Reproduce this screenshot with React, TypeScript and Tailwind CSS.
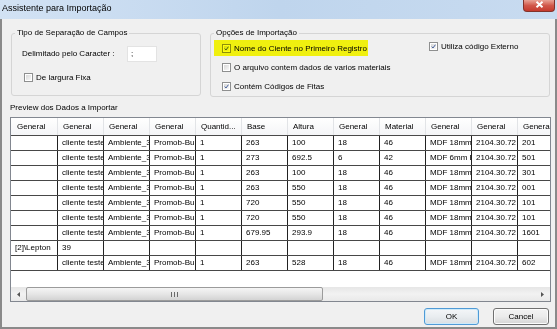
import React from 'react';

const columns = ['General', 'General', 'General', 'General', 'Quantid...', 'Base', 'Altura', 'General', 'Material', 'General', 'General', 'General'];

const rows: string[][] = [
  ['', 'cliente teste', 'Ambiente_3', 'Promob-Builder', '1', '263', '100', '18', '46', 'MDF 18mm Branco', '2104.30.72', '201'],
  ['', 'cliente teste', 'Ambiente_3', 'Promob-Builder', '1', '273', '692.5', '6', '42', 'MDF 6mm Branco', '2104.30.72', '501'],
  ['', 'cliente teste', 'Ambiente_3', 'Promob-Builder', '1', '263', '100', '18', '46', 'MDF 18mm Branco', '2104.30.72', '301'],
  ['', 'cliente teste', 'Ambiente_3', 'Promob-Builder', '1', '263', '550', '18', '46', 'MDF 18mm Branco', '2104.30.72', '001'],
  ['', 'cliente teste', 'Ambiente_3', 'Promob-Builder', '1', '720', '550', '18', '46', 'MDF 18mm Branco', '2104.30.72', '101'],
  ['', 'cliente teste', 'Ambiente_3', 'Promob-Builder', '1', '720', '550', '18', '46', 'MDF 18mm Branco', '2104.30.72', '101'],
  ['', 'cliente teste', 'Ambiente_3', 'Promob-Builder', '1', '679.95', '293.9', '18', '46', 'MDF 18mm Branco', '2104.30.72', '1601'],
  ['[2]\\Lepton', '39', '', '', '', '', '', '', '', '', '', ''],
  ['', 'cliente teste', 'Ambiente_3', 'Promob-Builder', '1', '263', '528', '18', '46', 'MDF 18mm Branco', '2104.30.72', '602'],
];

// win7 style checkbox, shrunk to the size of the screenshot
function CheckBox({ checked }: { checked?: boolean }) {
  return (
    <span className="flex h-[9px] w-[9px] shrink-0 items-center justify-center border border-[#8e8f8f] bg-white p-[1px]">
      <span className="flex h-full w-full items-center justify-center bg-gradient-to-br from-[#d9d9d9] to-[#f7f7f7]">
        {checked && (
          <svg width="7" height="7" viewBox="0 0 7 7">
            <path d="M1 3.6 L2.8 5.6 L6.2 1" fill="none" stroke="#3b5796" strokeWidth="1.3" />
          </svg>
        )}
      </span>
    </span>
  );
}

function Option({ label, checked }: { label: string; checked?: boolean }) {
  return (
    <div className="flex h-[15px] items-center gap-[3px]">
      <CheckBox checked={checked} />
      <span className="whitespace-nowrap">{label}</span>
    </div>
  );
}

export default function App() {
  return (
    <div className="flex h-[329px] w-[557px] flex-col overflow-hidden font-['Liberation_Sans',Arial,sans-serif] text-[8px] leading-[10px] text-black">
      {/* Title bar */}
      <div className="flex h-[19px] shrink-0 items-start justify-between bg-gradient-to-r from-[#d2e2f4] via-[#bfd5ed] to-[#c8dbf0] pl-[2px] pr-[2px]">
        <span className="mt-[3px] text-[9px] leading-[11px]">Assistente para Importação</span>
        <div className="flex h-[12px] w-[32px] items-start justify-center rounded-b-[4px] border border-t-0 border-[#83322a] bg-gradient-to-b from-[#e8a295] via-[#d1574a] to-[#c5392c]">
          <svg width="9" height="7" viewBox="0 0 9 7" className="mt-[1px]">
            <path d="M1.5 0.8 L7.5 6.2 M7.5 0.8 L1.5 6.2" stroke="white" strokeWidth="1.9" />
          </svg>
        </div>
      </div>

      {/* Dialog body */}
      <div className="flex flex-1 flex-col border-x-2 border-b-2 border-[#8a8a8a] bg-[#f0f0f0] pl-[8px] pr-[4px]">
        <div className="mt-[14px] flex">
          {/* Tipo de Separação de Campos */}
          <div className="ml-[1px] h-[63px] w-[190px] rounded-[3px] border border-[#d5d5d5]">
            <span className="-mt-[6px] ml-[3px] block w-fit bg-[#f0f0f0] px-[2px]">Tipo de Separação de Campos</span>
            <div className="mt-[8px] flex h-[16px] items-center pl-[10px]">
              <span className="w-[105px] whitespace-nowrap">Delimitado pelo Caracter :</span>
              <div className="flex h-[16px] w-[30px] items-center border border-[#e3e3e3] bg-white pl-[3px]">;</div>
            </div>
            <div className="ml-[12px] mt-[8px]">
              <Option label="De largura Fixa" />
            </div>
          </div>

          {/* Opções de Importação */}
          <div className="ml-[9px] h-[64px] w-[340px] rounded-[3px] border border-[#d5d5d5]">
            <span className="-mt-[6px] ml-[3px] block w-fit bg-[#f0f0f0] px-[2px]">Opções de Importação</span>
            <div className="flex pl-[11px]">
              <div className="mt-[3px] flex w-[207px] flex-col gap-[4px]">
                <div className="relative w-fit">
                  <Option label="Nome do Ciente no Primeiro Registro" checked />
                  <span className="absolute -left-[8px] -right-[1px] -top-[1px] bottom-0 bg-[#ffff10] mix-blend-multiply blur-[0.5px]" />
                </div>
                <Option label="O arquivo contem dados de varios materiais" />
                <Option label="Contém Códigos de Fitas" checked />
              </div>
              <div className="mt-[1px]">
                <Option label="Utiliza código Externo" checked />
              </div>
            </div>
          </div>
        </div>

        <span className="mt-[6px]">Preview dos Dados a Importar</span>

        {/* Preview list */}
        <div className="mt-[4px] flex h-[185px] w-[541px] flex-col overflow-hidden border border-[#828790] bg-white">
          <div className="flex h-[18px] shrink-0 border-b border-[#4a4a4a] bg-gradient-to-b from-white to-[#f4f5f7]">
            {columns.map((c, i) => (
              <div
                key={i}
                className={`${i === 0 ? 'w-[47px] pl-[6px]' : 'w-[46px] pl-[5px]'} shrink-0 overflow-hidden whitespace-nowrap border-r border-[#e2e4e7] leading-[17px]`}
              >
                {c}
              </div>
            ))}
          </div>
          {rows.map((r, ri) => (
            <div key={ri} className="flex h-[15px] shrink-0 border-b border-[#474747]">
              {r.map((v, i) => (
                <div
                  key={i}
                  className={`${i === 0 ? 'w-[47px] pl-[4px]' : 'w-[46px] pl-[4px]'} shrink-0 overflow-hidden whitespace-nowrap border-r border-[#222] leading-[14px]`}
                >
                  {v}
                </div>
              ))}
            </div>
          ))}
          <div className="flex-1" />

          {/* horizontal scrollbar */}
          <div className="flex h-[14px] shrink-0 items-center bg-gradient-to-b from-[#e6e6e6] via-[#f2f2f2] to-[#e9e9e9]">
            <div className="flex w-[15px] justify-center">
              <svg width="3" height="5" viewBox="0 0 3 5"><path d="M3 0 L0 2.5 L3 5 Z" fill="#555" /></svg>
            </div>
            <div className="flex h-[14px] w-[297px] items-center justify-center rounded-[2px] border border-[#9b9b9b] bg-gradient-to-b from-[#f5f5f5] via-[#e6e6e6] to-[#d3d3d3]">
              <svg width="7" height="5" viewBox="0 0 7 5">
                <path d="M0.5 0 V5 M3.5 0 V5 M6.5 0 V5" stroke="#6a6a6a" strokeWidth="1" />
              </svg>
            </div>
            <div className="flex-1" />
            <div className="flex w-[15px] justify-center">
              <svg width="3" height="5" viewBox="0 0 3 5"><path d="M0 0 L3 2.5 L0 5 Z" fill="#555" /></svg>
            </div>
          </div>
        </div>

        {/* Buttons */}
        <div className="mt-[6px] flex justify-end gap-[14px] pr-[2px]">
          <button className="h-[17px] w-[55px] rounded-[3px] border border-[#4f9ad6] bg-gradient-to-b from-[#f4f6f8] via-[#e9edf0] to-[#d9dee2] shadow-[inset_0_0_0_1px_#cdeafa]">
            OK
          </button>
          <button className="h-[17px] w-[56px] rounded-[3px] border border-[#707070] bg-gradient-to-b from-[#f3f3f3] via-[#ebebeb] to-[#d5d5d5] shadow-[inset_0_0_0_1px_#fcfcfc]">
            Cancel
          </button>
        </div>
      </div>
    </div>
  );
}
